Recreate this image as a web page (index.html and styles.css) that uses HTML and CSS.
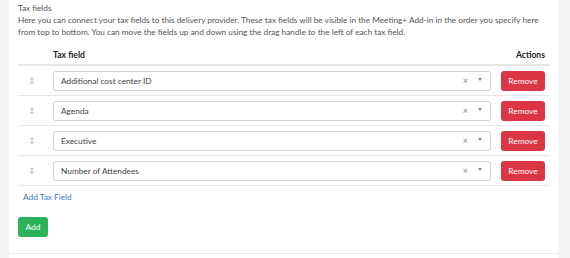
FILE: index.html
```html
<!DOCTYPE html>
<html>
<head>
<meta charset="utf-8">
<link rel="stylesheet" href="styles.css">
</head>
<body>
<div class="page">
  <div class="card">
    <div class="body">
      <div class="label">Tax fields</div>
      <p class="desc">Here you can connect your tax fields to this delivery provider. These tax fields will be visible in the Meeting+ Add-in in the order you specify here from top to bottom. You can move the fields up and down using the drag handle to the left of each tax field.</p>
      <div class="table">
        <div class="row head">
          <div class="c-drag"></div>
          <div class="c-field">Tax field</div>
          <div class="c-act">Actions</div>
        </div>
        <div class="row">
          <div class="c-drag"><span class="handle">↕</span></div>
          <div class="c-field"><div class="select"><span class="val">Additional cost center ID</span><span class="clr">×</span><span class="caret"></span></div></div>
          <div class="c-act"><button class="btn danger">Remove</button></div>
        </div>
        <div class="row">
          <div class="c-drag"><span class="handle">↕</span></div>
          <div class="c-field"><div class="select"><span class="val">Agenda</span><span class="clr">×</span><span class="caret"></span></div></div>
          <div class="c-act"><button class="btn danger">Remove</button></div>
        </div>
        <div class="row">
          <div class="c-drag"><span class="handle">↕</span></div>
          <div class="c-field"><div class="select"><span class="val">Executive</span><span class="clr">×</span><span class="caret"></span></div></div>
          <div class="c-act"><button class="btn danger">Remove</button></div>
        </div>
        <div class="row">
          <div class="c-drag"><span class="handle">↕</span></div>
          <div class="c-field"><div class="select"><span class="val">Number of Attendees</span><span class="clr">×</span><span class="caret"></span></div></div>
          <div class="c-act"><button class="btn danger">Remove</button></div>
        </div>
      </div>
      <a class="addlink" href="#">Add Tax Field</a>
      <button class="btn success">Add</button>
    </div>
  </div>
</div>
</body>
</html>
```

FILE: styles.css
```css
html, body {
  margin: 0;
  padding: 0;
  background: #f4f5f7;
  font-family: Lato, "Liberation Sans", sans-serif;
  font-size: 8.25px;
  color: #555;
}
.page {
  padding-left: 9px;
  padding-right: 12px;
  height: 258px;
  box-sizing: border-box;
}
.card {
  background: #fff;
  height: 258px;
}
.body {
  padding: 2px 8px 0 9px;
  height: 254px;
  box-sizing: border-box;
  border-bottom: 1px solid #e9ecef;
}
.label {
  line-height: 12px;
  color: #555;
}
.desc {
  margin: 0;
  line-height: 12px;
  color: #555;
}
.row {
  display: flex;
  align-items: center;
  height: 30px;
  box-sizing: border-box;
  border-bottom: 1px solid #e8e8e8;
  padding-right: 5px;
  font-size: 8.3px;
}
.row.head {
  height: 28px;
  border-bottom: 2px solid #e6e6e6;
  font-weight: 700;
  font-size: 8.6px;
  color: #222;
  align-items: flex-end;
  padding-bottom: 3px;
  line-height: 12px;
}
.c-drag {
  width: 35px;
  flex: none;
  text-align: center;
}
.handle {
  color: #c0c0c0;
  font-size: 9px;
  font-family: "DejaVu Sans", sans-serif;
  display: inline-block;
  margin-left: -7px;
}
.c-field {
  flex: 1;
}
.c-act {
  width: 54px;
  flex: none;
  text-align: right;
}
.select {
  height: 20px;
  box-sizing: border-box;
  border: 1px solid #d3d3d3;
  border-radius: 3px;
  display: flex;
  align-items: center;
  padding-left: 7px;
  padding-right: 8px;
  color: #444;
}
.val {
  flex: 1;
}
.clr {
  color: #888;
  font-size: 9px;
  margin-right: 10px;
}
.caret {
  width: 0;
  height: 0;
  border-left: 2.5px solid transparent;
  border-right: 2.5px solid transparent;
  border-top: 3px solid #888;
  margin-top: -2px;
}
.btn {
  font-family: Lato, "Liberation Sans", sans-serif;
  font-size: 8.3px;
  border: none;
  border-radius: 3px;
  color: #fff;
  height: 20px;
  padding: 0;
  cursor: pointer;
}
.danger {
  background: #dc3545;
  width: 44px;
}
.success {
  background: #2bb35a;
  display: block;
  margin-top: 14px;
  width: 30px;
}
.addlink {
  display: block;
  margin-top: 5px;
  margin-left: 5px;
  color: #3d7bc6;
  text-decoration: none;
  line-height: 12px;
  font-size: 8.3px;
  width: max-content;
}
```
